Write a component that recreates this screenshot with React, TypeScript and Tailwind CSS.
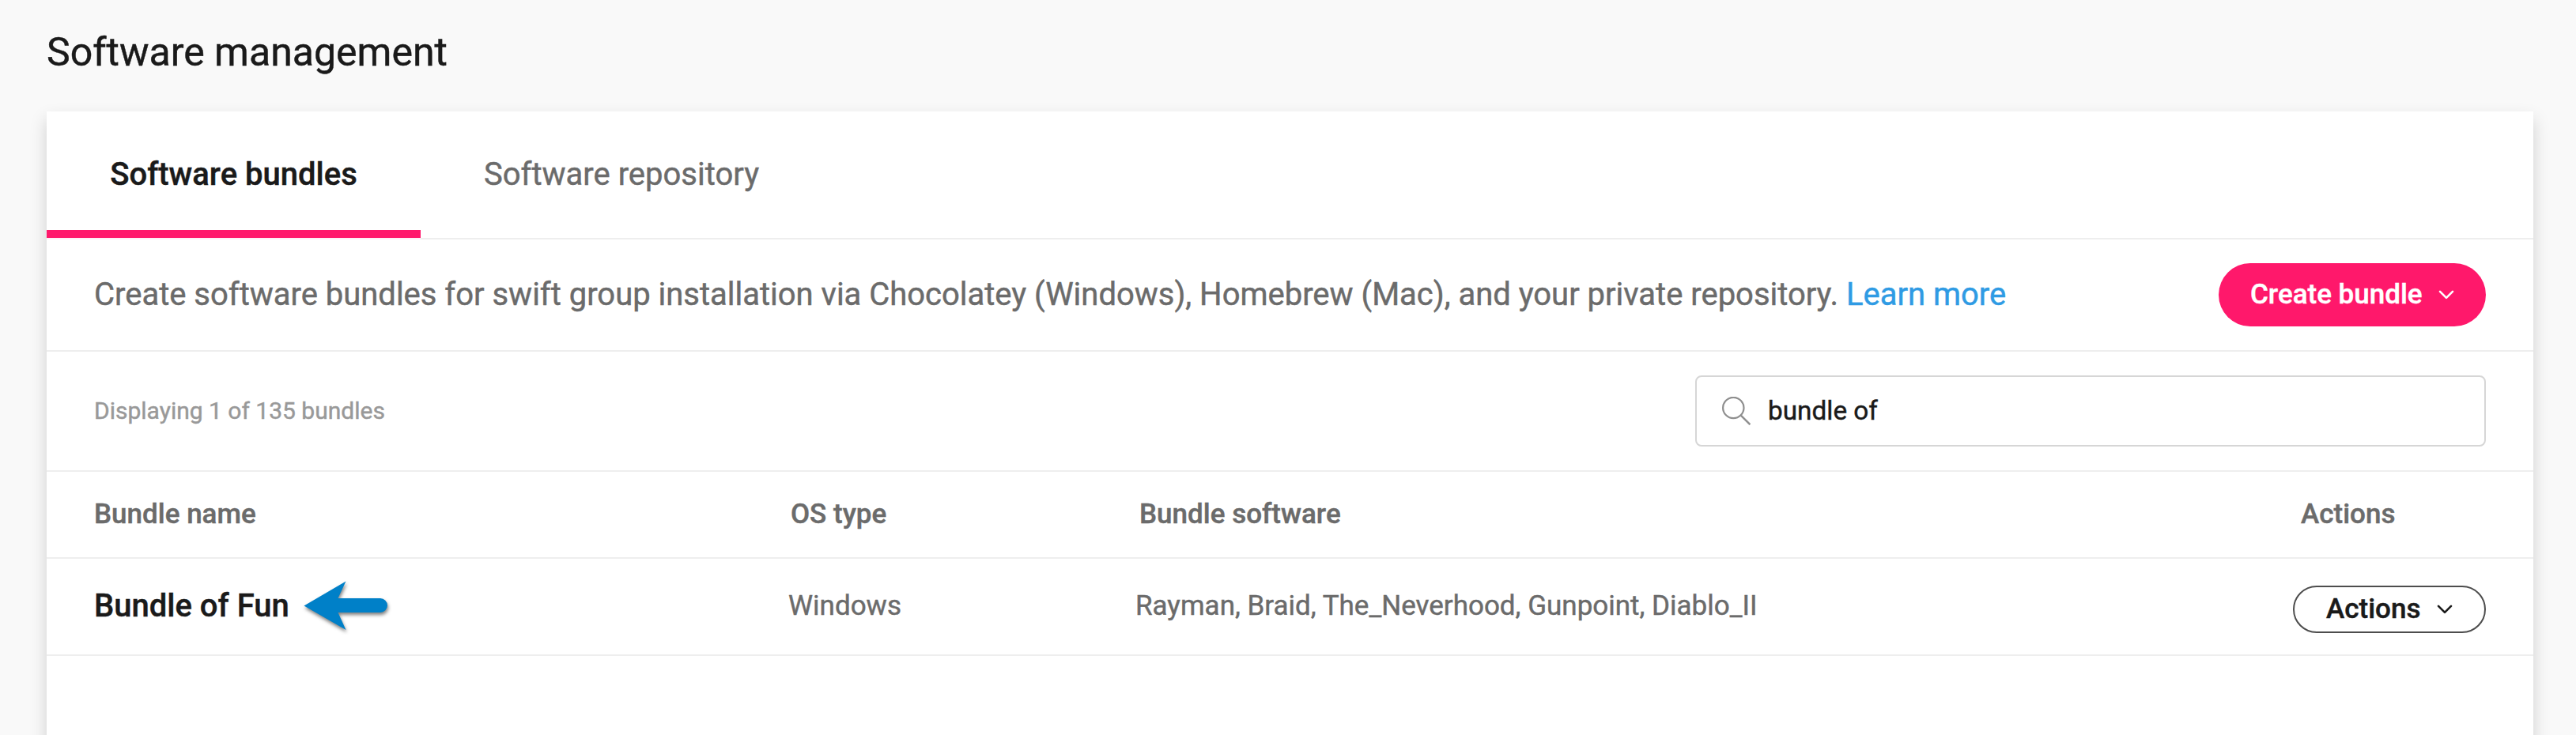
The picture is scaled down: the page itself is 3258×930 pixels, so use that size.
const bundles = [
  {
    name: "Bundle of Fun",
    os: "Windows",
    software: "Rayman, Braid, The_Neverhood, Gunpoint, Diablo_II",
  },
];

function ChevronDown() {
  return (
    <svg width="20" height="12" viewBox="0 0 20 12" fill="none" stroke="currentColor" strokeWidth="2.6" strokeLinecap="round" strokeLinejoin="round">
      <path d="M2 1.8 L10 9.8 L18 1.8" />
    </svg>
  );
}

function SearchIcon() {
  return (
    <svg width="36" height="36" viewBox="0 0 36 36" fill="none" stroke="#8f8f8f" strokeWidth="2.2" className="shrink-0">
      <circle cx="14.3" cy="14" r="13.2" />
      <path d="M23.8 23.6 L35.4 35.2" strokeWidth="2.5" />
    </svg>
  );
}

function PointerArrow() {
  return (
    <svg width="120" height="76" viewBox="0 0 120 76" className="absolute left-[258px] top-[22px] overflow-visible drop-shadow-[1px_3px_2px_rgba(0,0,0,0.5)]">
      <path d="M7.5 37.5 L60.5 6.5 L50.5 28 H104 a9 9 0 0 1 0 18 H50.5 L60.5 68 Z" fill="#0080c8" />
    </svg>
  );
}

export default function App() {
  return (
    <div className="h-[930px] overflow-hidden bg-[#f9f9f9] pl-[59px] pr-[54px] font-[Roboto,sans-serif] text-[#1a1a1a] [-webkit-text-stroke:0.45px]">
      <header className="flex h-[141px] items-center pb-[9px]">
        <h1 className="text-[50px] leading-[60px]">Software management</h1>
      </header>

      <main className="h-[900px] bg-white shadow-[0_10px_20px_rgba(0,0,0,0.17)]">
        <nav className="flex h-[162px] text-[40px]">
          <div className="flex flex-col">
            <button className="flex h-[160px] w-[473px] items-center justify-center border-b-10 border-[#ff186b] pt-[9px] font-medium leading-[48px]">
              Software bundles
            </button>
            <div className="h-0.5 bg-[#fdf0f4]" />
          </div>
          <div className="flex flex-1 border-b-2 border-[#eeeeee]">
            <button className="flex items-center px-20 pb-px leading-[48px] text-[#6b6b6b]">Software repository</button>
          </div>
        </nav>

        <section className="flex h-[142px] items-center justify-between border-b-2 border-[#eeeeee] px-[60px]">
          <p className="pb-px text-[40px] leading-[48px] tracking-[-0.013px] text-[#6b6b6b]">
            Create software bundles for swift group installation via Chocolatey (Windows), Homebrew (Mac), and your private repository.{" "}
            <a className="text-[#2f9be4]">Learn more</a>
          </p>
          <button className="flex h-20 w-[338px] items-center justify-between rounded-full bg-[#ff186b] px-10 text-[35px] font-medium leading-[42px] text-white">
            <span className="pb-px">Create bundle</span>
            <ChevronDown />
          </button>
        </section>

        <section className="flex h-[152px] items-center justify-between border-b-2 border-[#eeeeee] px-[60px]">
          <p className="pb-px text-[30px] leading-[36px] text-[#999999]">Displaying 1 of 135 bundles</p>
          <label className="flex h-[90px] w-[1000px] items-center gap-[22px] rounded-lg border-2 border-[#d6d6d6] px-8">
            <SearchIcon />
            <input defaultValue="bundle of" className="w-full pb-px text-[33.33px] leading-[40px] outline-none" />
          </label>
        </section>

        <div className="grid h-[110px] grid-cols-[879px_438px_1fr_244px] items-center border-b-2 border-[#eeeeee] px-[60px] pb-px text-[35px] font-medium leading-[42px] text-[#6b6b6b]">
          <span>Bundle name</span>
          <span className="pl-0.5">OS type</span>
          <span className="pl-[5px]">Bundle software</span>
          <span className="pl-2.5">Actions</span>
        </div>

        {bundles.map((bundle) => (
          <div
            key={bundle.name}
            className="grid h-[123px] grid-cols-[879px_438px_1fr_244px] items-center border-b-2 border-[#eeeeee] px-[60px] text-[35px] leading-[42px] text-[#6b6b6b]"
          >
            <div className="relative flex h-full items-center pb-0.5">
              <span className="text-[40px] font-medium leading-[48px] text-[#1a1a1a]">{bundle.name}</span>
              <PointerArrow />
            </div>
            <span className="-ml-px pb-0.5">{bundle.os}</span>
            <span className="pb-0.5">{bundle.software}</span>
            <button className="mt-[7px] flex h-[60px] items-center justify-between rounded-full border-2 border-[#4d4d4d] px-10 font-medium text-[#1a1a1a]">
              <span className="pb-px">Actions</span>
              <ChevronDown />
            </button>
          </div>
        ))}
      </main>
    </div>
  );
}
